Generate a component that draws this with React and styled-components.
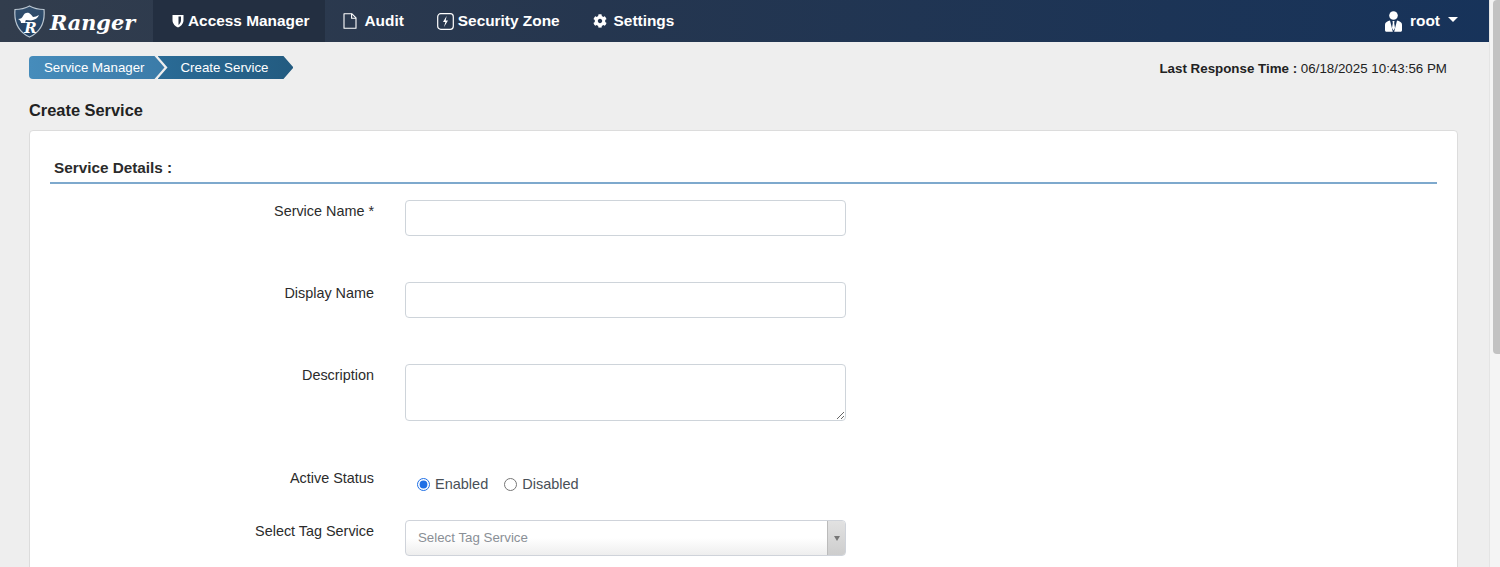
import React from "react";
import styled, { createGlobalStyle } from "styled-components";
import { FaCog } from "react-icons/fa";

const Global = createGlobalStyle`
  html, body {
    margin: 0;
    height: 567px;
    overflow: hidden;
    background: #eeeeee;
    font-family: "Liberation Sans", Arial, sans-serif;
    color: #222;
  }
  * { box-sizing: border-box; }
`;

const Shell = styled.div`
  display: flex;
  height: 567px;
  overflow: hidden;
`;

const Page = styled.div`
  width: 1489px;
  flex: none;
`;

const Track = styled.div`
  flex: 1;
  background: #f4f4f4;
  border-left: 1px solid #e4e4e4;
  padding: 0 0 0 3px;
`;

const Thumb = styled.div`
  height: 354px;
  background: #c2c2c2;
  border-radius: 4px 0 0 4px;
`;

const Nav = styled.nav`
  height: 42px;
  display: flex;
  align-items: stretch;
  background: linear-gradient(90deg, #323d4d 0%, #25364f 40%, #17335a 100%);
  color: #fff;
`;

const Brand = styled.div`
  width: 153px;
  display: flex;
  align-items: center;
  padding-left: 13px;
  gap: 4px;
`;

const BrandName = styled.span`
  font: italic bold 20.8px "DejaVu Serif", serif;
  margin-top: 3px;
`;

const NavItem = styled.a`
  display: flex;
  align-items: center;
  gap: ${(p) => p.$gap || 4}px;
  padding: 0 16px 0 ${(p) => p.$left || 17}px;
  font-size: 15.4px;
  font-weight: bold;
  background: ${(p) => (p.$active ? "#232f41" : "transparent")};
`;

const NavRight = styled.div`
  margin-left: auto;
  display: flex;
  align-items: center;
  gap: 8px;
  padding-right: 31px;
  font-size: 15.4px;
  font-weight: bold;
`;

const Caret = styled.span`
  width: 0;
  height: 0;
  margin-top: -3px;
  border-left: 5px solid transparent;
  border-right: 5px solid transparent;
  border-top: 5px solid #fff;
`;

const Content = styled.main`
  padding: 14px 31px 0 29px;
`;

const TopRow = styled.div`
  display: flex;
  justify-content: space-between;
  align-items: center;
  height: 23px;
`;

const Crumbs = styled.div`
  display: flex;
`;

const Crumb = styled.span`
  height: 23px;
  display: flex;
  align-items: center;
  color: #fff;
  font-size: 13.3px;
  ${(p) =>
    p.$last
      ? `
    margin-left: -7px;
    padding: 0 25px 0 23px;
    background: linear-gradient(90deg, #2a6b96, #235b80);
    clip-path: polygon(0 0, calc(100% - 10px) 0, 100% 50%, calc(100% - 10px) 100%, 0 100%, 10px 50%);
  `
      : `
    padding: 0 20px 0 15px;
    border-radius: 4px 0 0 4px;
    background: linear-gradient(90deg, #468cbb, #3b7ba8);
    clip-path: polygon(0 0, calc(100% - 10px) 0, 100% 50%, calc(100% - 10px) 100%, 0 100%);
  `}
`;

const ResponseTime = styled.div`
  font-size: 13.35px;
  padding-right: 11px;
  margin-top: 1px;
  b {
    font-weight: bold;
  }
`;

const Title = styled.h1`
  margin: 20px 0 0;
  height: 31px;
  font-size: 16.4px;
  line-height: 22px;
  font-weight: bold;
  color: #222;
`;

const Card = styled.section`
  height: 460px;
  background: #fff;
  border: 1px solid #dcdcdc;
  border-radius: 4px;
  padding: 26px 20px 0 20px;
`;

const SectionTitle = styled.h2`
  margin: 0 0 16px;
  height: 27px;
  padding-left: 4px;
  font-size: 15.3px;
  line-height: 21px;
  font-weight: bold;
  color: #2b2b2b;
  border-bottom: 2px solid #7ea9cd;
`;

const Row = styled.div`
  display: grid;
  grid-template-columns: 324px 441px;
  column-gap: 31px;
  margin-bottom: ${(p) => p.$after}px;
`;

const Label = styled.label`
  text-align: right;
  font-size: 14.4px;
  line-height: 20px;
  color: #2b2b2b;
  padding-top: 1px;
`;

const Input = styled.input`
  display: block;
  width: 100%;
  height: 36px;
  border: 1px solid #ced4da;
  border-radius: 4px;
  background: #fff;
`;

const TextArea = styled.textarea`
  display: block;
  width: 100%;
  height: 57px;
  border: 1px solid #ced4da;
  border-radius: 4px;
  background: #fff;
`;

const Radios = styled.div`
  display: flex;
  align-items: center;
  height: 24px;
  margin-top: 5px;
  padding-left: 12px;
  gap: 16px;
`;

const RadioLabel = styled.label`
  display: flex;
  align-items: center;
  gap: 5px;
  font-size: 14.5px;
  color: #495057;
`;

const Radio = styled.input`
  margin: 0;
  width: 13px;
  height: 13px;
  accent-color: #1f6fe5;
`;

const Select = styled.div`
  height: 36px;
  display: flex;
  align-items: stretch;
  border: 1px solid #cfd3da;
  border-radius: 4px;
  background: linear-gradient(180deg, #fff 50%, #eee 100%);
  font-size: 13.3px;
  color: #8a8f96;
`;

const SelectText = styled.span`
  flex: 1;
  line-height: 34px;
  padding-left: 12px;
`;

const SelectArrow = styled.span`
  width: 18px;
  display: flex;
  align-items: center;
  justify-content: center;
  border-left: 1px solid #bbb;
  border-radius: 0 3px 3px 0;
  background: linear-gradient(180deg, #e2e2e2, #cdcdcd);
  &::after {
    content: "";
    border-left: 3px solid transparent;
    border-right: 3px solid transparent;
    border-top: 5px solid #777;
  }
`;

const Logo = () => (
  <svg width="33" height="33" viewBox="0 0 33 33">
    <defs>
      <linearGradient id="shield" x1="0" y1="0" x2="0" y2="1">
        <stop offset="0" stopColor="#34506e" />
        <stop offset="1" stopColor="#1f3f61" />
      </linearGradient>
    </defs>
    <path
      d="M16.5 1 C21 3.5 26 4.5 31 4.5 C32 15 29 26 16.5 32 C4 26 1 15 2 4.5 C7 4.5 12 3.5 16.5 1 Z"
      fill="url(#shield)"
      stroke="#b9c5d0"
      strokeWidth="1.2"
    />
    <path
      d="M5 14 C8 14 9 13 10 11 C11 8 14 7 16 8 C18 9 19 11 20 12 C22 12 24 11 26 10 C25 13 22 15 18 15.5 L13 15 C12 16 12 17 13 18 L8 18 C8 16 7 15 5 14 Z"
      fill="#fff"
    />
    <text
      x="17.5"
      y="28"
      textAnchor="middle"
      fill="#fff"
      fontFamily="DejaVu Serif"
      fontStyle="italic"
      fontWeight="bold"
      fontSize="15"
    >
      R
    </text>
  </svg>
);

const ShieldIcon = () => (
  <svg width="12" height="14" viewBox="0 0 12 14">
    <path d="M0.5 1 H11.5 V6 C11.5 10 8.5 12.5 6 13.5 C3.5 12.5 0.5 10 0.5 6 Z" fill="#fff" />
    <path d="M6.5 2.5 H9 V6 C9 8 8 9.8 6.5 11 Z" fill="#232f41" />
  </svg>
);

const FileIcon = () => (
  <svg width="14" height="16" viewBox="0 0 14 16" fill="none" stroke="#fff" strokeWidth="1.1">
    <path d="M1 0.8 H9 L13 4.8 V15.2 H1 Z" strokeLinejoin="round" />
    <path d="M8.6 0.8 V5.2 H13" />
  </svg>
);

const ZoneIcon = () => (
  <svg width="17" height="17" viewBox="0 0 17 17" fill="none">
    <rect x="0.7" y="0.7" width="15.6" height="15.6" rx="3" stroke="#fff" strokeWidth="1.2" />
    <path d="M9.6 3 L6 9 H8.4 L7 14 L11 7.6 H8.7 Z" fill="#fff" />
  </svg>
);

const UserIcon = () => (
  <svg width="17" height="21" viewBox="0 0 17 21">
    <circle cx="8.5" cy="4.5" r="4.3" fill="#fff" />
    <path
      d="M5 9.6 L7.8 20.8 H1.5 C0.6 20.8 0 20.2 0 19.3 V13.5 C0 11.5 2.5 10.2 5 9.6 Z"
      fill="#fff"
    />
    <path
      d="M12 9.6 L9.2 20.8 H15.5 C16.4 20.8 17 20.2 17 19.3 V13.5 C17 11.5 14.5 10.2 12 9.6 Z"
      fill="#fff"
    />
    <path d="M7.5 10 H9.5 L9.2 12 L10 17 L8.5 19.5 L7 17 L7.8 12 Z" fill="#fff" />
  </svg>
);

export default function App() {
  return (
    <Shell>
      <Global />
      <Page>
        <Nav>
          <Brand>
            <Logo />
            <BrandName>Ranger</BrandName>
          </Brand>
          <NavItem $active $left={19}>
            <ShieldIcon />
            Access Manager
          </NavItem>
          <NavItem $gap={7} $left={18}>
            <FileIcon />
            Audit
          </NavItem>
          <NavItem>
            <ZoneIcon />
            Security Zone
          </NavItem>
          <NavItem $gap={7}>
            <FaCog size={14} />
            Settings
          </NavItem>
          <NavRight>
            <UserIcon />
            root
            <Caret />
          </NavRight>
        </Nav>
        <Content>
          <TopRow>
            <Crumbs>
              <Crumb>Service Manager</Crumb>
              <Crumb $last>Create Service</Crumb>
            </Crumbs>
            <ResponseTime>
              <b>Last Response Time :</b> 06/18/2025 10:43:56 PM
            </ResponseTime>
          </TopRow>
          <Title>Create Service</Title>
          <Card>
            <SectionTitle>Service Details :</SectionTitle>
            <Row $after={46}>
              <Label>Service Name *</Label>
              <Input />
            </Row>
            <Row $after={46}>
              <Label>Display Name</Label>
              <Input />
            </Row>
            <Row $after={46}>
              <Label>Description</Label>
              <TextArea />
            </Row>
            <Row $after={24}>
              <Label>Active Status</Label>
              <Radios>
                <RadioLabel>
                  <Radio type="radio" name="status" defaultChecked />
                  Enabled
                </RadioLabel>
                <RadioLabel>
                  <Radio type="radio" name="status" />
                  Disabled
                </RadioLabel>
              </Radios>
            </Row>
            <Row $after={0}>
              <Label>Select Tag Service</Label>
              <Select>
                <SelectText>Select Tag Service</SelectText>
                <SelectArrow />
              </Select>
            </Row>
          </Card>
        </Content>
      </Page>
      <Track>
        <Thumb />
      </Track>
    </Shell>
  );
}
